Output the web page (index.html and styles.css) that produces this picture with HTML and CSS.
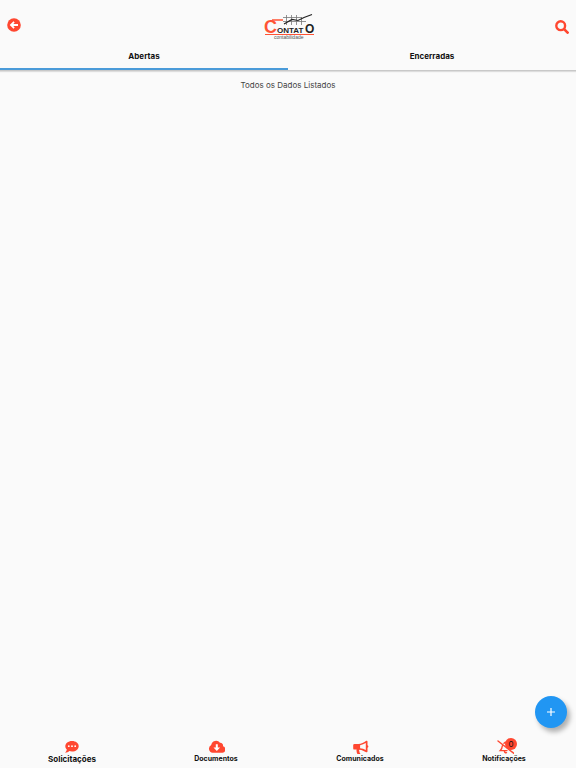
FILE: index.html
```html
<!DOCTYPE html>
<html lang="pt-BR">
<head>
<meta charset="utf-8">
<meta name="viewport" content="width=device-width, initial-scale=1">
<title>Contato Contabilidade</title>
<link rel="stylesheet" href="styles.css">
</head>
<body>
<header class="header">
  <div class="toolbar">
    <button class="icon-button back" type="button" aria-label="Voltar">
      <svg width="14" height="14" viewBox="0 0 14 14"><circle cx="7" cy="7" r="6.800" fill="#ff4730"/><path d="M2.700 7 6.500 3.200 7.700 4.400 6.300 5.900H11V8.100H6.300L7.700 9.600 6.500 10.800Z" fill="#fff"/></svg>
    </button>
    <svg class="logo" width="52" height="28" viewBox="0 0 52 28" role="img" aria-label="Contato Contabilidade">
      <path d="M19 4.500H38M19 8.500H42M22.500 2V12M27.500 2V12M32.500 2V12M37.500 4V12" fill="none" stroke="#777" stroke-width=".8"/>
      <path d="M20 11 28 6.500 34 7.500 40 4.500 48 1.500" fill="none" stroke="#222" stroke-width="1.200"/>
      <path d="M8 7H19" stroke="#ff5335" stroke-width="1.500"/>
      <text class="logo-initial" x="0" y="20">C</text>
      <text class="logo-name" x="13" y="20">ONTAT</text>
      <text class="logo-end" x="41" y="20">O</text>
      <path d="M1 21.500H50" stroke="#ff5335" stroke-width="1"/>
      <text class="logo-tagline" x="10" y="26">contabilidade</text>
    </svg>
    <button class="icon-button" type="button" aria-label="Pesquisar">
      <svg width="14" height="14" viewBox="0 0 14 14"><circle cx="5.700" cy="5.700" r="4.400" fill="none" stroke="#ff4730" stroke-width="2.400"/><path d="m9.100 9.100 3.500 3.500" stroke="#ff4730" stroke-width="2.700" stroke-linecap="round"/></svg>
    </button>
  </div>
  <div class="tabs" role="tablist">
    <button class="tab tab-active" type="button" role="tab" aria-selected="true">Abertas</button>
    <button class="tab" type="button" role="tab" aria-selected="false">Encerradas</button>
  </div>
</header>
<main class="content">
  <p class="status">Todos os Dados Listados</p>
</main>
<button class="fab" type="button" aria-label="Adicionar">
  <svg width="10" height="10" viewBox="0 0 10 10"><path d="M5 1V9M1 5H9" stroke="#fff" stroke-width="1.200"/></svg>
</button>
<nav class="bottom-nav">
  <a class="nav-item nav-current" href="#solicitacoes" aria-current="page">
    <svg width="18" height="14" viewBox="0 0 18 14"><path d="M9 1C5.200 1 2.300 3.300 2.300 6.200c0 1.300.5 2.400 1.500 3.300-.2 1.300-.9 2.400-1.700 3.200 1.800 0 3.200-.7 4.200-1.600.9.300 1.800.4 2.700.4 3.800 0 6.700-2.300 6.700-5.300S12.800 1 9 1Z" fill="#ff4730"/><g fill="#fff"><circle cx="5.800" cy="6.200" r=".9"/><circle cx="9" cy="6.200" r=".9"/><circle cx="12.200" cy="6.200" r=".9"/></g></svg>
    <span>Solicitações</span>
  </a>
  <a class="nav-item" href="#documentos">
    <svg width="18" height="14" viewBox="0 0 18 14"><path d="M5.600 12.800A4.100 4.100 0 0 1 4.200 5.100 4.900 4.900 0 0 1 13 2.800 2.800 2.800 0 0 1 16 6.200 3.400 3.400 0 0 1 15.600 12.800Z" fill="#ff4730"/><path d="M8.800 4.200H10.800V7.500H13.100L9.800 11 6.500 7.500H8.800Z" fill="#fff"/></svg>
    <span>Documentos</span>
  </a>
  <a class="nav-item" href="#comunicados">
    <svg width="18" height="14" viewBox="0 0 18 14"><path d="M16.500 1.500v3.700a1.400 1.400 0 0 1 0 2.600V11.500q0 .8-.8.800h-.5C13.200 10.900 11 10 8.500 9.700c-.6.600-.6 1.200 0 1.800-.3.700.1 1.300 1 1.900-.8.700-2.200.8-3.300.3-.5-1.300-.9-2.600-.6-4.100H3.500Q2.200 9.600 2.200 8.400V5.200Q2.200 4 3.500 4H7.400C10.200 3.800 13 2.500 15.200.7h.5q.8 0 .8.800Z" fill="#ff4730"/><path d="M9.100 5.200Q12.200 4.600 14.800 3V10Q12.200 8.500 9.100 8.200Z" fill="#fafafa"/></svg>
    <span>Comunicados</span>
  </a>
  <a class="nav-item" href="#notificacoes">
    <span class="bell">
      <svg width="20" height="14" viewBox="0 0 20 14"><path d="M4 1 20 13.500M10 3.300Q12 1.400 14.300 3.300M8.300 6Q8.100 8.700 6.300 10.600H13M10.500 11.500Q11 13.200 12.500 12.700" fill="none" stroke="#ff4730" stroke-width="1.400" stroke-linecap="round"/></svg>
      <span class="badge">0</span>
    </span>
    <span>Notificações</span>
  </a>
</nav>
</body>
</html>
```

FILE: styles.css
```css
* {
  box-sizing: border-box;
}

body {
  margin: 0;
  min-height: 100vh;
  display: flex;
  flex-direction: column;
  background: #fafafa;
  color: #111;
  font-family: Inter, "Liberation Sans", sans-serif;
  font-size: 8px;
}

button {
  padding: 0;
  border: 0;
  background: none;
  color: inherit;
  font: inherit;
  cursor: pointer;
}

svg {
  display: block;
}

.header {
  border-bottom: 1px solid #c8c8c8;
  box-shadow: 0 1px 1px #ddd;
}

.toolbar {
  display: grid;
  grid-template-columns: 1fr auto 1fr;
  align-items: center;
  height: 41px;
  padding: 12px 7px 0;
}

.icon-button {
  justify-self: end;
}

.back {
  justify-self: start;
  padding-bottom: 4px;
}

.logo {
  overflow: visible;
  margin-left: 4px;
}

.logo-initial {
  fill: #ff5335;
  font: bold 18px "Liberation Sans", sans-serif;
}

.logo-name {
  fill: #222;
  font: bold 8px "Liberation Sans", sans-serif;
}

.logo-end {
  fill: #222;
  font: bold 12px "Liberation Sans", sans-serif;
}

.logo-tagline {
  fill: #555;
  font: 5px "Liberation Sans", sans-serif;
}

.tabs {
  display: grid;
  grid-template-columns: 1fr 1fr;
}

.tab {
  height: 29px;
  padding-top: 2px;
  border-bottom: 2px solid transparent;
  font-weight: 700;
}

.tab-active {
  border-bottom-color: #4a9bd9;
}

.content {
  flex: 1;
}

.status {
  margin: 8px 0 0;
  color: #444;
  line-height: 12px;
  text-align: center;
}

.fab {
  position: fixed;
  right: 9px;
  bottom: 40px;
  display: grid;
  place-items: center;
  width: 32px;
  height: 32px;
  border-radius: 50%;
  background: #2196f3;
  box-shadow: 3px 4px 5px rgba(0, 0, 0, 0.3);
}

.bottom-nav {
  display: grid;
  grid-template-columns: repeat(4, 1fr);
  align-items: end;
  padding-bottom: 4px;
}

.nav-item {
  display: flex;
  flex-direction: column;
  align-items: center;
  color: inherit;
  font-size: 7px;
  font-weight: 700;
  line-height: 10px;
  text-decoration: none;
}

.nav-current {
  font-size: 8px;
}

.bell {
  position: relative;
}

.badge {
  position: absolute;
  top: -2px;
  right: -3px;
  width: 12px;
  height: 12px;
  border-radius: 50%;
  background: #ff4730;
  font-size: 8px;
  font-weight: 400;
  line-height: 12px;
  text-align: center;
}
```
